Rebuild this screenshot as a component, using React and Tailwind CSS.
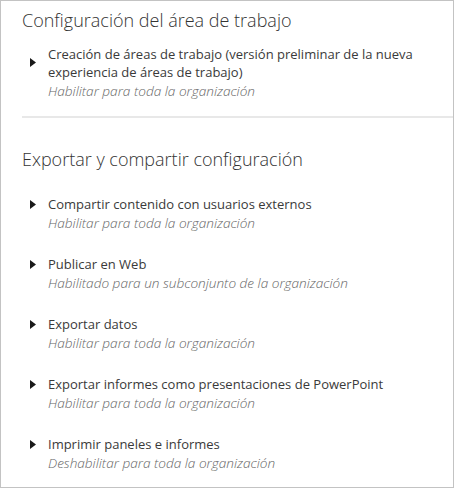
import React from "react";

const Arrow = () => (
  <svg width="6" height="9" viewBox="0 0 6 9">
    <polygon points="0,0 6,4.5 0,9" fill="#1a1a1a" />
  </svg>
);

const Item = ({ title, status, multi }) => (
  <div className="flex">
    <div className={"w-[26px] shrink-0 flex pl-[8px] " + (multi ? "pt-[12px]" : "pt-[4px]")}>
      <Arrow />
    </div>
    <div className="flex flex-col">
      <div className="text-[13px] leading-[17.5px] text-[#3a3a3a]">{title}</div>
      <div className="mt-[1px] text-[13.6px] leading-[17.5px] italic font-light text-[#666]">{status}</div>
    </div>
  </div>
);

export default function App() {
  return (
    <div
      className="w-[454px] h-[488px] border border-[#c3c3c3] bg-white overflow-hidden"
      style={{ fontFamily: '"Open Sans", "Noto Sans", sans-serif' }}
    >
      <div className="pl-[21px] pt-[6px]">
        <div className="text-[18px] leading-[26px] text-[#333] font-light">Configuración del área de trabajo</div>
        <div className="mt-[13px]">
          <Item
            multi
            title={<>Creación de áreas de trabajo (versión preliminar de la nueva<br />experiencia de áreas de trabajo)</>}
            status="Habilitar para toda la organización"
          />
        </div>
        <div className="mt-[16px] h-[2px] bg-[#e8e8e8]" />
        <div className="mt-[28px] text-[18px] leading-[26px] text-[#333] font-light">Exportar y compartir configuración</div>
        <div className="mt-[24px] flex flex-col gap-[24px]">
          <Item title="Compartir contenido con usuarios externos" status="Habilitar para toda la organización" />
          <Item title="Publicar en Web" status="Habilitado para un subconjunto de la organización" />
          <Item title="Exportar datos" status="Habilitar para toda la organización" />
          <Item title="Exportar informes como presentaciones de PowerPoint" status="Habilitar para toda la organización" />
          <Item title="Imprimir paneles e informes" status="Deshabilitar para toda la organización" />
        </div>
      </div>
    </div>
  );
}
